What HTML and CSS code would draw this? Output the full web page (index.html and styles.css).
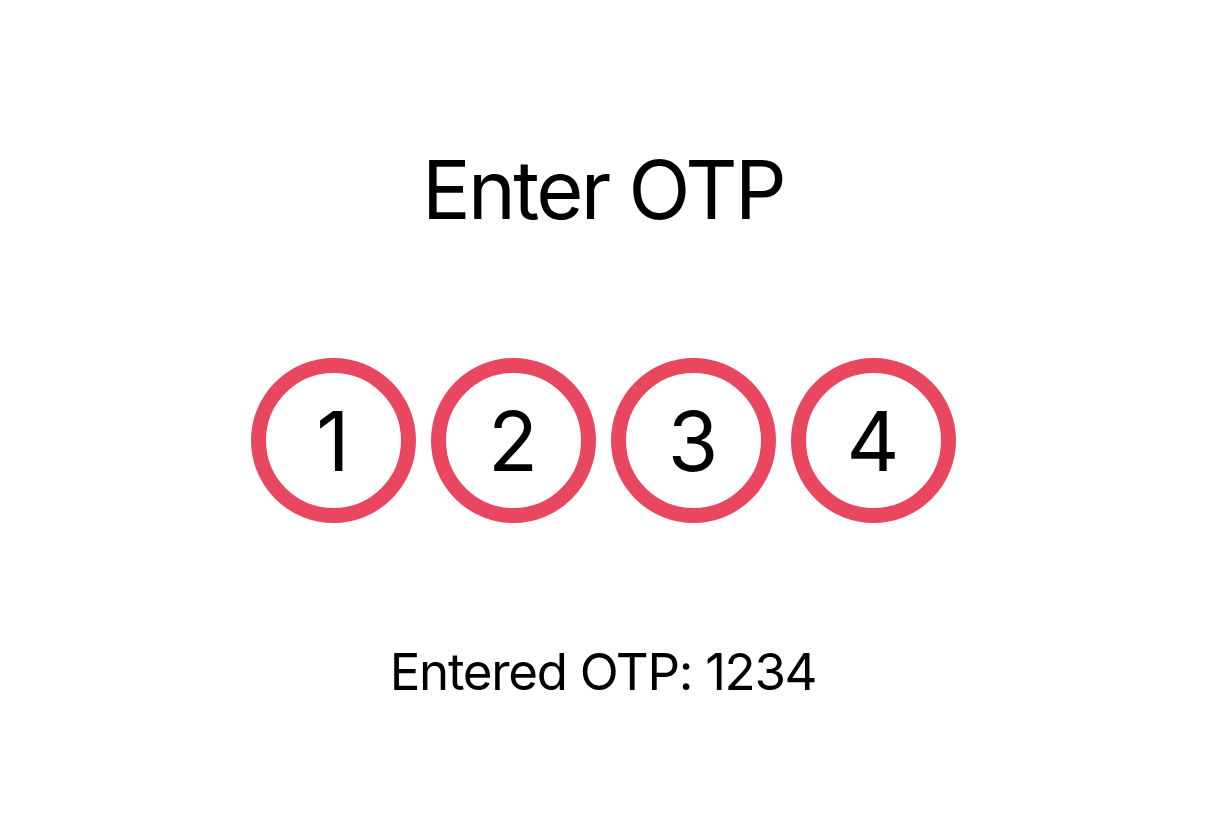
FILE: index.html
```html
<!DOCTYPE html>
<html lang="en">
<head>
<meta charset="utf-8">
<title>Enter OTP</title>
<link rel="stylesheet" href="styles.css">
</head>
<body>
<main class="screen">
  <h1 class="title">Enter OTP</h1>
  <div class="otp-row">
    <div class="otp-cell">1</div>
    <div class="otp-cell">2</div>
    <div class="otp-cell">3</div>
    <div class="otp-cell">4</div>
  </div>
  <p class="result">Entered OTP: 1234</p>
</main>
</body>
</html>
```
FILE: styles.css
```css
html, body {
  margin: 0;
  padding: 0;
  background: #ffffff;
}
body {
  font-family: Inter, "Noto Sans", "Liberation Sans", sans-serif;
  color: #000000;
}
.screen {
  width: 1206px;
  height: 814px;
  display: flex;
  flex-direction: column;
  align-items: center;
  padding-top: 150px;
  box-sizing: border-box;
}
.title {
  margin: 0;
  font-size: 81px;
  font-weight: 400;
  line-height: 1;
  letter-spacing: -2.7px;
}
.otp-row {
  display: flex;
  gap: 15px;
  margin-top: 127px;
}
.otp-cell {
  width: 165px;
  height: 165px;
  box-sizing: border-box;
  border: 15px solid #e9475f;
  border-radius: 50%;
  display: flex;
  align-items: center;
  justify-content: center;
  font-size: 82px;
  line-height: 1;
  padding-top: 2px;
}
.result {
  margin: 123px 0 0;
  font-size: 51px;
  line-height: 1;
  letter-spacing: -1.3px;
}
```
